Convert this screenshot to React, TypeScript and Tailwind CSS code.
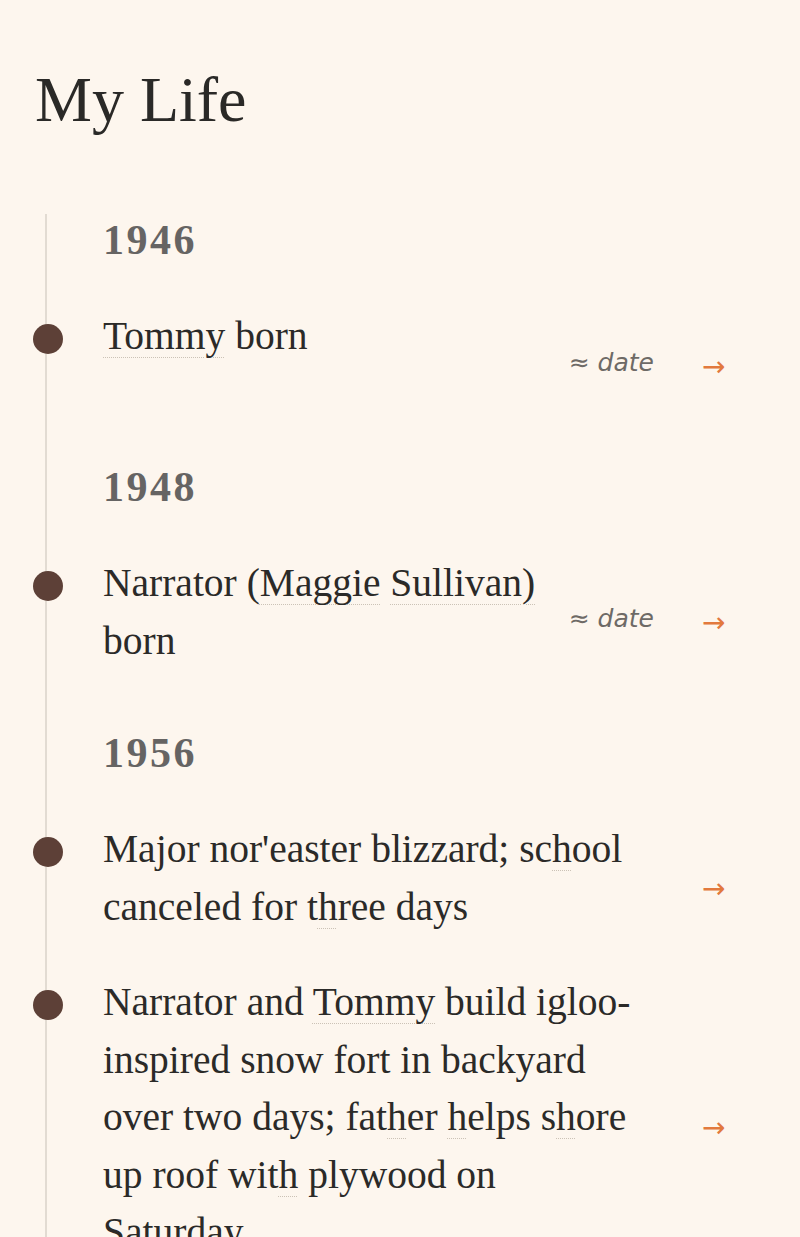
import React from 'react'

type Entry = {
  text: string
  date?: boolean
  minH?: boolean
}

type Section = {
  year: string
  entries: Entry[]
}

const sections: Section[] = [
  { year: '1946', entries: [{ text: '[Tommy] born', date: true, minH: true }] },
  { year: '1948', entries: [{ text: 'Narrator ([Maggie] [Sullivan)] born', date: true }] },
  {
    year: '1956',
    entries: [
      { text: "Major nor'easter blizzard; school canceled for three days" },
      {
        text: 'Narrator and [Tommy] build igloo-inspired snow fort in backyard over two days; father helps shore up roof with plywood on Saturday',
      },
    ],
  },
]

const dotted = 'underline decoration-dotted decoration-1 underline-offset-[8px] decoration-[#cbc2b6]'

// names in [brackets] get a dotted underline, and so does every "h"
const renderText = (text: string) => {
  const parts = text.split(/(\[[^\]]+\])/)
  return parts.map((part, i) => {
    if (part.startsWith('[')) {
      return (
        <span key={i} className={dotted}>
          {part.slice(1, -1)}
        </span>
      )
    }
    return part.split(/(h)/).map((bit, j) =>
      bit === 'h' ? (
        <span key={`${i}-${j}`} className={dotted}>
          h
        </span>
      ) : (
        <React.Fragment key={`${i}-${j}`}>{bit}</React.Fragment>
      )
    )
  })
}

const EntryRow = ({ text, date, minH }: Entry) => {
  return (
    <li className="relative flex flex-row items-center pt-[23px] pb-[15px]">
      <div className="absolute left-[-70px] top-[39px] w-[30px] h-[30px] rounded-full bg-[#5d4037]" />
      <div
        className={`flex-1 min-w-0 text-[39.5px] leading-[57.5px] text-[#2b2a28] ${date ? 'mr-[20px]' : 'mr-[63px]'} ${minH ? 'min-h-[96px]' : ''}`}
      >
        {renderText(text)}
      </div>
      <div className="flex flex-row items-center pt-[13px] shrink-0">
        {date && (
          <span className="mr-[46px] text-[25px] italic text-[#6e6a66] font-['DejaVu_Sans',sans-serif]">
            ≈ date
          </span>
        )}
        <span className="w-[40px] pl-[2px] pt-[8px] text-[28px] text-[#e2793d] font-['DejaVu_Sans',sans-serif]">→</span>
      </div>
    </li>
  )
}

export default function App() {
  return (
    <div className="min-h-screen bg-[#fdf6ee] pl-[35px] pr-[60px] pt-[68px] font-['Liberation_Serif',serif] overflow-hidden">
      <h1 className="text-[64px] leading-none font-normal text-[#2a2927]">My Life</h1>
      <div className="mt-[82px] ml-[10px] border-l-2 border-[#e2dbd2] pl-[56px] pt-[5px] pb-[40px]">
        {sections.map((section, idx) => (
          <section key={section.year}>
            <h2
              className={`text-[42px] leading-none font-bold tracking-[2.5px] text-[#666463] mb-[24px] ${idx === 0 ? '' : 'mt-[47px]'}`}
            >
              {section.year}
            </h2>
            <ul>
              {section.entries.map((entry, i) => (
                <EntryRow key={i} {...entry} />
              ))}
            </ul>
          </section>
        ))}
      </div>
    </div>
  )
}
